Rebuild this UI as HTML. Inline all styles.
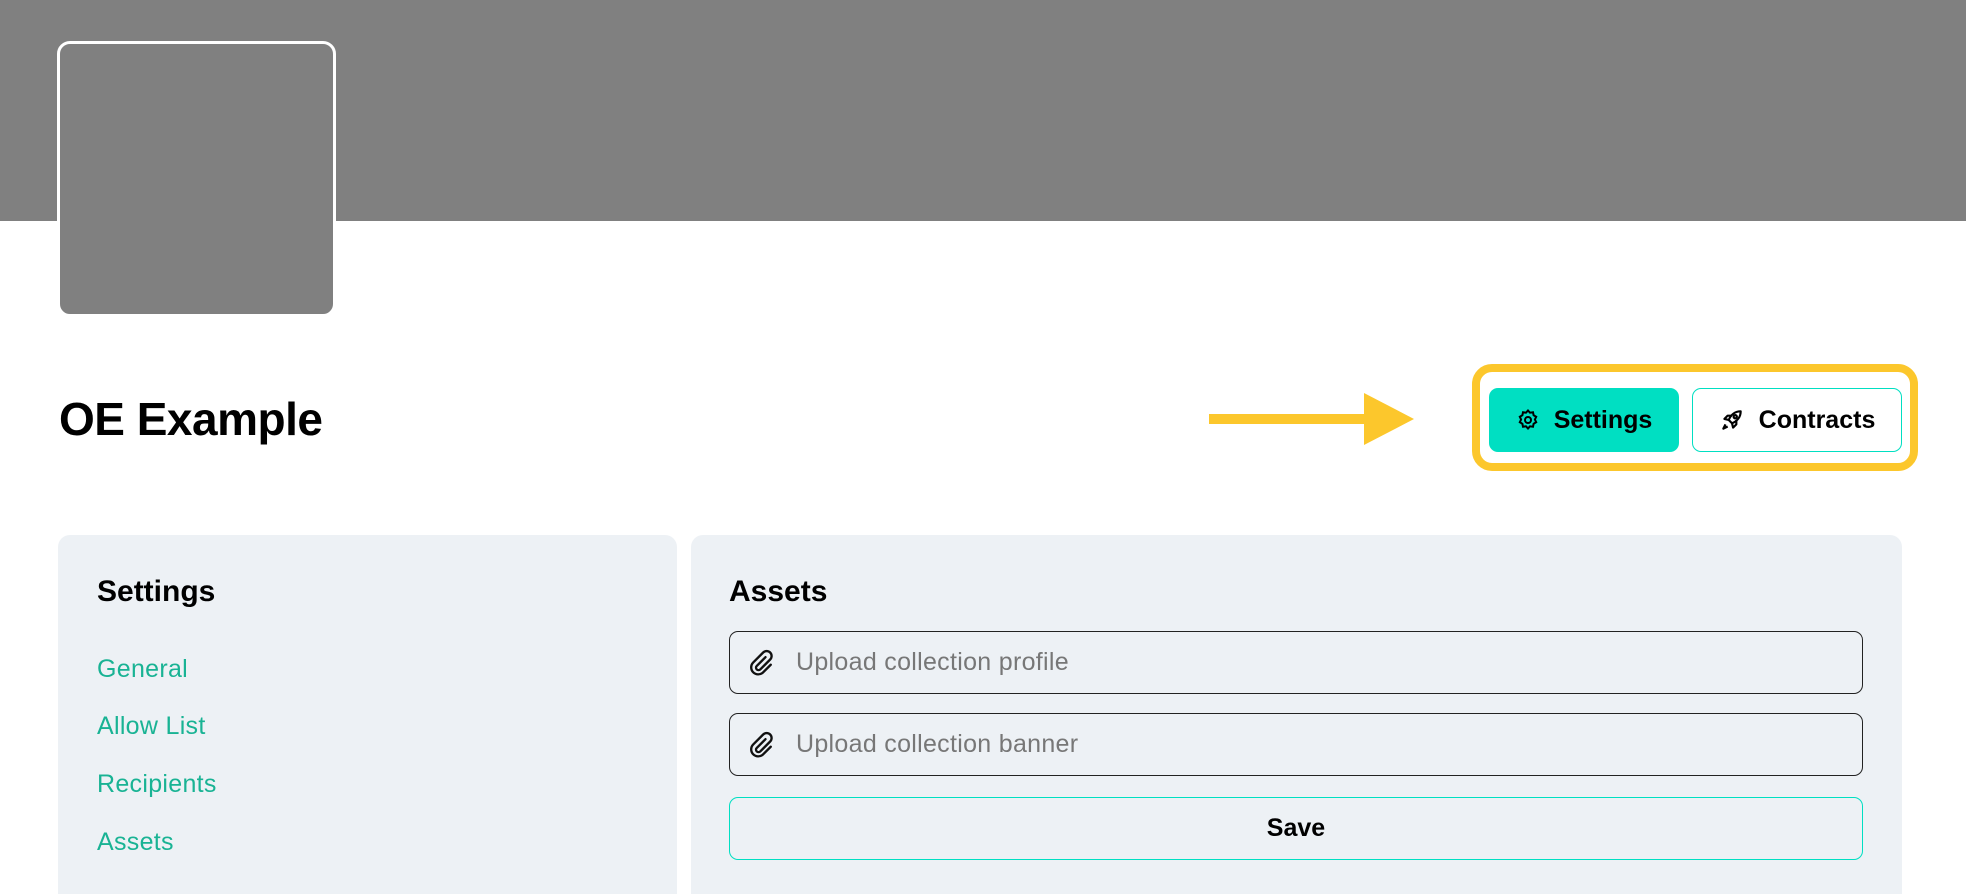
<!DOCTYPE html>
<html style="width:1966px;height:894px;overflow:hidden"><head><meta charset="utf-8"><style>
*{margin:0;padding:0;box-sizing:border-box}
body{width:1966px;height:894px;overflow:hidden;background:#fff;font-family:"Liberation Sans",sans-serif;position:relative}
.a{position:absolute}
.banner{left:0;top:0;width:1966px;height:221px;background:#808080}
.avatar{left:57px;top:41px;width:279px;height:276px;background:#808080;border:3px solid #fff;border-radius:13px}
.title{left:59px;top:392px;font-size:46px;font-weight:bold;color:#000;letter-spacing:-0.5px}
.ybox{left:1472px;top:364px;width:446px;height:107px;border:8px solid #fcc72c;border-radius:20px}
.btn{display:flex;align-items:center;justify-content:center;font-weight:bold;font-size:25px;color:#000;border-radius:9px;gap:14px}
.panel{background:#edf1f5;top:535px;height:359px;border-radius:12px 12px 0 0}
.h{font-size:30px;font-weight:bold;color:#000}
.link{left:97px;font-size:25px;color:#19b394;letter-spacing:0.3px}
.inp{left:729px;width:1134px;height:63px;border:1.5px solid #222;border-radius:9px;display:flex;align-items:center;padding-left:18px;font-size:25px;color:#777;gap:20px;letter-spacing:0.3px}
</style></head><body>
<div class="a banner"></div>
<div class="a avatar"></div>
<div class="a title">OE Example</div>
<div class="a" style="left:1209px;top:414px;width:158px;height:10px;background:#fcc72c"></div>
<svg class="a" style="left:1364px;top:393px" width="52" height="52"><polygon points="0,0 50,26 0,52" fill="#fcc72c"/></svg>
<div class="a ybox"></div>
<div class="a btn" style="left:1489px;top:388px;width:190px;height:64px;background:#00dfc2">
<svg width="24" height="24" viewBox="0 0 24 24" fill="none" stroke="#000" stroke-width="2"><circle cx="12" cy="12" r="3"/><path d="M12 2.5l2 2.2 3-.4.6 2.9 2.6 1.6-1.3 2.7 1.3 2.7-2.6 1.6-.6 2.9-3-.4-2 2.2-2-2.2-3 .4-.6-2.9-2.6-1.6 1.3-2.7-1.3-2.7 2.6-1.6.6-2.9 3 .4z"/></svg>Settings</div>
<div class="a btn" style="left:1692px;top:388px;width:210px;height:64px;background:#fff;border:1.5px solid #00dfc2">
<svg width="26" height="26" viewBox="0 0 24 24" fill="none" stroke="#000" stroke-width="2" stroke-linejoin="round"><path d="M20 4c-5 0-9 3-11 8l3 3c5-2 8-6 8-11z"/><path d="M9 12l-4-1 3-3h4"/><path d="M12 15l1 4 3-3v-4"/><path d="M6 16l-2 4 4-2"/><circle cx="15" cy="9" r="1.5"/></svg>Contracts</div>
<div class="a panel" style="left:58px;width:619px"></div>
<div class="a panel" style="left:691px;width:1211px"></div>
<div class="a h" style="left:97px;top:575px">Settings</div>
<div class="a link" style="top:655px">General</div>
<div class="a link" style="top:712px">Allow List</div>
<div class="a link" style="top:770px">Recipients</div>
<div class="a link" style="top:828px">Assets</div>
<div class="a h" style="left:729px;top:575px">Assets</div>
<div class="a inp" style="top:631px"><svg width="28" height="28" viewBox="0 0 24 24" fill="none" stroke="#111" stroke-width="2" stroke-linecap="round"><path d="M15 7l-7.5 7.5a2 2 0 0 0 3 3L19 9a4 4 0 0 0-6-6L4.5 11.5a6 6 0 0 0 8.5 8.5L19.5 13.5"/></svg>Upload collection profile</div>
<div class="a inp" style="top:713px"><svg width="28" height="28" viewBox="0 0 24 24" fill="none" stroke="#111" stroke-width="2" stroke-linecap="round"><path d="M15 7l-7.5 7.5a2 2 0 0 0 3 3L19 9a4 4 0 0 0-6-6L4.5 11.5a6 6 0 0 0 8.5 8.5L19.5 13.5"/></svg>Upload collection banner</div>
<div class="a" style="left:729px;top:797px;width:1134px;height:63px;border:1.5px solid #00dfc2;border-radius:9px;display:flex;align-items:center;justify-content:center;font-weight:bold;font-size:25px;color:#000">Save</div>
</body></html>
